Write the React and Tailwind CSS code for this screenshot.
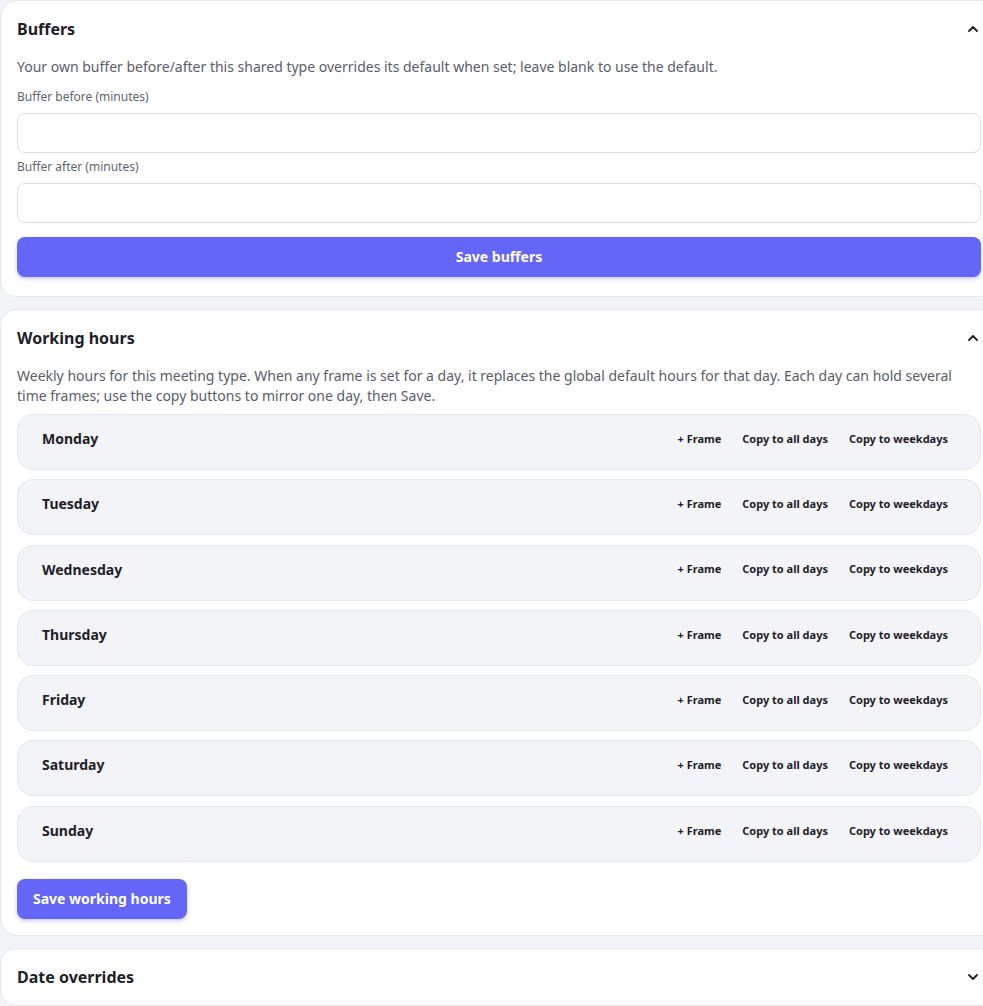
import { ChevronDown, ChevronUp } from 'lucide-react';

const days = ['Monday', 'Tuesday', 'Wednesday', 'Thursday', 'Friday', 'Saturday', 'Sunday'];

function Card({ title, open = true, className = 'pb-4', children }) {
  return (
    <section className={`w-[998px] rounded-2xl border border-[#e6e7ec] bg-white px-4 pt-4 ${className}`}>
      <div className="flex h-6 items-center justify-between">
        <h2 className="text-base font-bold text-[#1f2029]">{title}</h2>
        {open ? <ChevronUp size={16} strokeWidth={2.75} className="text-[#1f2029]" /> : <ChevronDown size={16} strokeWidth={2.75} className="text-[#1f2029]" />}
      </div>
      {children}
    </section>
  );
}

function Field({ label }) {
  return (
    <div>
      <label className="block text-xs leading-4 text-[#60646e]">{label}</label>
      <input className="mt-2 block h-10 w-full rounded-lg border border-[#dcdee4] bg-white px-3 text-sm outline-none" />
    </div>
  );
}

function DayRow({ day }) {
  return (
    <div className="h-14 rounded-2xl border border-[#e6e7ec] bg-[#f3f4f8] px-6 pt-3">
      <div className="flex h-6 items-center justify-between">
        <span className="text-sm font-bold text-[#1f2029]">{day}</span>
        <div className="flex gap-[5px] text-[11px] font-bold text-[#1f2029]">
          <button className="px-2">+ Frame</button>
          <button className="px-2">Copy to all days</button>
          <button className="px-2">Copy to weekdays</button>
        </div>
      </div>
    </div>
  );
}

export default function App() {
  return (
    <div className="h-[1006px] w-[983px] overflow-hidden bg-[#f3f4f8] font-['Noto_Sans',sans-serif]">
      <div className="flex flex-col gap-3">
        <Card title="Buffers" className="pb-[19px]">
          <p className="mt-4 text-sm leading-5 text-[#595d68]">
            Your own buffer before/after this shared type overrides its default when set; leave blank to use the default.
          </p>
          <div className="mt-3 flex flex-col gap-1.5">
            <Field label="Buffer before (minutes)" />
            <Field label="Buffer after (minutes)" />
          </div>
          <button className="mt-3.5 h-10 w-full rounded-lg bg-[#6366f6] text-sm font-bold text-white shadow-[0_2px_4px_rgba(99,102,241,0.35)]">
            Save buffers
          </button>
        </Card>

        <Card title="Working hours">
          <p className="mt-4 text-sm leading-5 text-[#595d68]">
            Weekly hours for this meeting type. When any frame is set for a day, it replaces the global default hours for that day. Each day can hold several time frames; use the copy buttons to mirror one day, then Save.
          </p>
          <div className="mt-2 flex flex-col gap-[9.3px]">
            {days.map((day) => (
              <DayRow key={day} day={day} />
            ))}
          </div>
          <button className="mt-[17px] h-10 rounded-lg bg-[#6366f6] px-4 text-sm font-bold text-white shadow-[0_2px_4px_rgba(99,102,241,0.35)]">
            Save working hours
          </button>
        </Card>

        <Card title="Date overrides" open={false} />
      </div>
    </div>
  );
}
